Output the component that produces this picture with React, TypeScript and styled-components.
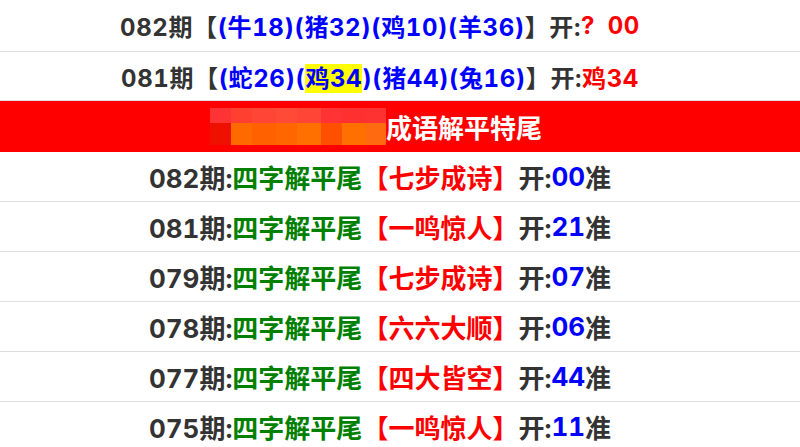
import React from "react";
import styled, { createGlobalStyle } from "styled-components";

const Global = createGlobalStyle`
  html, body { margin: 0; padding: 0; background: #fff; }
  body {
    font-family: Inter, "Noto Sans CJK SC", sans-serif;
    font-variant-numeric: tabular-nums;
  }
`;

const Page = styled.div`
  width: 800px;
  display: flex;
  flex-direction: column;
`;

const Row = styled.div<{ $h: number; $size: number; $track?: number }>`
  height: ${(p) => p.$h}px;
  border-bottom: 1px solid #dddddd;
  display: flex;
  align-items: center;
  justify-content: center;
  padding-right: 40px;
  font-size: ${(p) => p.$size}px;
  letter-spacing: ${(p) => p.$track ?? 0}px;
  font-weight: 700;
  color: #333333;
  white-space: pre;
`;

const Banner = styled.div`
  height: 51px;
  background: #ff0000;
  display: flex;
  align-items: center;
  justify-content: center;
  padding-right: 48px;
  font-size: 26px;
  font-weight: 700;
  color: #ffffff;
  white-space: nowrap;
`;

const Tone = styled.span<{ $c: string }>`
  color: ${(p) => p.$c};
`;

const Mark = styled.span`
  background: #ffff00;
`;

const BLUE = "#0000ff";
const RED = "#ff0000";
const GREEN = "#008000";

const Mosaic = () => {
  const top = ["#ff3333", "#ff4030", "#ff4535", "#ff4a38", "#ff4535", "#ff3333", "#ff3030", "#ff3232"];
  const bottom = ["#ee1100", "#ff6a00", "#ff6000", "#ff6600", "#ff7000", "#ff5000", "#ff7000", "#ff6a10"];
  const xs = [0, 21, 42, 66, 87, 111, 132, 156, 176];
  return (
    <svg width="176" height="37" viewBox="0 0 176 37" style={{ display: "block" }}>
      {top.map((c, i) => (
        <rect key={"t" + i} x={xs[i]} y={0} width={xs[i + 1] - xs[i]} height={15} fill={c} />
      ))}
      {bottom.map((c, i) => (
        <rect key={"b" + i} x={xs[i]} y={15} width={xs[i + 1] - xs[i]} height={22} fill={c} />
      ))}
    </svg>
  );
};

const history = [
  { no: "082", idiom: "七步成诗", open: "00" },
  { no: "081", idiom: "一鸣惊人", open: "21" },
  { no: "079", idiom: "七步成诗", open: "07" },
  { no: "078", idiom: "六六大顺", open: "06" },
  { no: "077", idiom: "四大皆空", open: "44" },
  { no: "075", idiom: "一鸣惊人", open: "11" },
];

export default function App() {
  return (
    <Page>
      <Global />
      <Row $h={51} $size={24} $track={0.6}>
        082期【<Tone $c={BLUE}>(牛18)(猪32)(鸡10)(羊36)</Tone>】开:<Tone $c={RED}>?{"\u2002"}00</Tone>
      </Row>
      <Row $h={48} $size={24} $track={0.6}>
        081期【<Tone $c={BLUE}>(蛇26)(<Mark>鸡34</Mark>)(猪44)(兔16)</Tone>】开:<Tone $c={RED}>鸡34</Tone>
      </Row>
      <Banner>
        <Mosaic />
        成语解平特尾
      </Banner>
      {history.map((h) => (
        <Row key={h.no} $h={49} $size={26}>
          {h.no}期:<Tone $c={GREEN}>四字解平尾</Tone>
          <Tone $c={RED}>【{h.idiom}】</Tone>开:<Tone $c={BLUE}>{h.open}</Tone>准
        </Row>
      ))}
    </Page>
  );
}
